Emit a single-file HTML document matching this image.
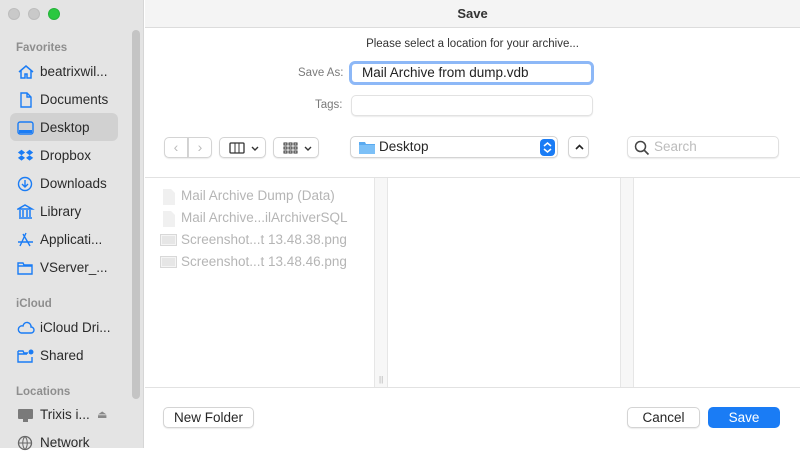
<!DOCTYPE html>
<html><head><meta charset="utf-8"><style>
*{box-sizing:border-box;margin:0;padding:0}
body{width:800px;height:448px;overflow:hidden;background:#fff;font-family:"Liberation Sans",sans-serif;position:relative;color:#262626}
.abs{position:absolute}
#side{left:0;top:0;width:144px;height:448px;background:#e4e4e4;border-right:1px solid #d6d6d6}
.dot{top:8px;width:12px;height:12px;border-radius:50%;background:#c9c9c9;border:1px solid #bdbdbd}
.sec{left:16px;font-size:11.5px;color:#8e8e8e;font-weight:bold}
.it{left:17px;font-size:13.5px;color:#2a2a2a;height:20px;line-height:20px;white-space:nowrap}
.it svg{position:absolute;left:0;top:2px}
.it span{position:absolute;left:23px}
#title{left:145px;top:0;width:655px;height:28px;background:#f4f4f4;border-bottom:1px solid #dcdcdc;text-align:center;font-size:13px;font-weight:bold;line-height:28px;color:#333}
.btn{background:#fff;border:1px solid #d4d4d4;border-radius:5px;box-shadow:0 1px 1px rgba(0,0,0,.08)}
.file{left:160px;font-size:13.5px;color:#b5b5b5;height:22px;line-height:22px}
.file span{position:absolute;left:21px;white-space:nowrap}
</style></head><body>
<div id="side" class="abs"></div>
<div class="abs dot" style="left:8px"></div>
<div class="abs dot" style="left:28px"></div>
<div class="abs dot" style="left:48px;background:#2ac840;border-color:#25b33a"></div>
<div class="abs" style="left:132px;top:30px;width:8px;height:369px;border-radius:4px;background:#c4c4c4"></div>
<div class="abs" style="left:10px;top:113px;width:108px;height:28px;border-radius:6px;background:#d1d1d1"></div>
<div class="abs sec" style="top:42px">Favorites</div>
<div class="abs it" style="top:62px"><svg width="18" height="16"><path d="M2 8L9 2l7 6M4 6v8h4v-4h2v4h4V6" fill="none" stroke="#1a7cf5" stroke-width="1.5"/></svg><span>beatrixwil...</span></div>
<div class="abs it" style="top:90px"><svg width="18" height="16"><path d="M4 1h6l4 4v10H4z M10 1v4h4" fill="none" stroke="#1a7cf5" stroke-width="1.4"/></svg><span>Documents</span></div>
<div class="abs it" style="top:118px"><svg width="18" height="16"><rect x="1" y="2" width="15" height="12" rx="2" fill="none" stroke="#1a7cf5" stroke-width="1.4"/><rect x="2" y="10" width="13" height="3" fill="#1a7cf5"/></svg><span>Desktop</span></div>
<div class="abs it" style="top:146px"><svg width="18" height="16"><path d="M4 2l4 3-4 3-4-3zM13 2l4 3-4 3-4-3zM4 8l4 3-4 3-4-3zM13 8l4 3-4 3-4-3z" fill="#1a7cf5" transform="scale(.9) translate(1,0)"/></svg><span>Dropbox</span></div>
<div class="abs it" style="top:174px"><svg width="18" height="16"><circle cx="8" cy="8" r="6.5" fill="none" stroke="#1a7cf5" stroke-width="1.4"/><path d="M8 4v7M5 8l3 3 3-3" fill="none" stroke="#1a7cf5" stroke-width="1.4"/></svg><span>Downloads</span></div>
<div class="abs it" style="top:202px"><svg width="18" height="16"><path d="M1 5L8 1l7 4zM2 14h13M3 6v7M6 6v7M10 6v7M13 6v7" fill="none" stroke="#1a7cf5" stroke-width="1.5"/></svg><span>Library</span></div>
<div class="abs it" style="top:230px"><svg width="18" height="16"><path d="M9 1L3 14M6 2l7 12M1 10h15" fill="none" stroke="#1a7cf5" stroke-width="1.4"/></svg><span>Applicati...</span></div>
<div class="abs it" style="top:258px"><svg width="18" height="16"><path d="M1 3h5l1 2h8v9H1z M1 6h14" fill="none" stroke="#1a7cf5" stroke-width="1.4"/></svg><span>VServer_...</span></div>
<div class="abs sec" style="top:298px">iCloud</div>
<div class="abs it" style="top:318px"><svg width="18" height="16"><path d="M4 13h10a3 3 0 0 0 0-6 4 4 0 0 0-8-1 3.5 3.5 0 0 0-2 7z" fill="none" stroke="#1a7cf5" stroke-width="1.4"/></svg><span>iCloud Dri...</span></div>
<div class="abs it" style="top:346px"><svg width="18" height="16"><path d="M1 3h5l1 2h4M1 3v11h14V9M1 6h9" fill="none" stroke="#1a7cf5" stroke-width="1.4"/><circle cx="14" cy="4" r="2.5" fill="#1a7cf5"/></svg><span>Shared</span></div>
<div class="abs sec" style="top:386px">Locations</div>
<div class="abs it" style="top:405px"><svg width="18" height="16"><rect x="1" y="2" width="15" height="10" rx="1" fill="#7a7a7a"/><rect x="6" y="12" width="5" height="3" fill="#7a7a7a"/></svg><span>Trixis i...</span><span style="left:80px;color:#888;font-size:11px">⏏</span></div>
<div class="abs it" style="top:433px"><svg width="18" height="16"><circle cx="8" cy="8" r="6.5" fill="none" stroke="#666" stroke-width="1.3"/><path d="M1.5 8h13M8 1.5c-3 3-3 10 0 13M8 1.5c3 3 3 10 0 13" fill="none" stroke="#666"/></svg><span>Network</span></div>

<div id="title" class="abs">Save</div>
<div class="abs" style="left:145px;top:38px;width:655px;text-align:center;font-size:11.5px;color:#333">Please select a location for your archive...</div>
<div class="abs" style="left:298px;top:67px;font-size:11.5px;color:#7a7a7a">Save As:</div>
<div class="abs" style="left:349px;top:61px;width:245px;height:24px;border:3px solid #8db8f7;border-radius:6px;padding-left:10px;line-height:18px;font-size:13.5px;color:#222">Mail Archive from dump.vdb</div>
<div class="abs" style="left:315px;top:99px;font-size:11.5px;color:#7a7a7a">Tags:</div>
<div class="abs btn" style="left:351px;top:95px;width:242px;height:21px;border-color:#e2e2e2"></div>

<div class="abs btn" style="left:164px;top:137px;width:24px;height:21px;border-radius:5px 0 0 5px;color:#bbb;font-size:14px;text-align:center;line-height:19px">‹</div>
<div class="abs btn" style="left:188px;top:137px;width:24px;height:21px;border-radius:0 5px 5px 0;color:#bbb;font-size:14px;text-align:center;line-height:19px">›</div>
<div class="abs btn" style="left:219px;top:137px;width:47px;height:21px"><svg class="abs" style="left:9px;top:4px" width="32" height="12"><rect x="1" y="1" width="14" height="10" rx="1" fill="none" stroke="#333" stroke-width="1.3"/><path d="M6 1v10M10 1v10" stroke="#333"/><path d="M23 5l3 3 3-3" fill="none" stroke="#333" stroke-width="1.4"/></svg></div>
<div class="abs btn" style="left:273px;top:137px;width:46px;height:21px"><svg class="abs" style="left:9px;top:4px" width="32" height="12"><g fill="none" stroke="#333"><rect x="1" y="1" width="3" height="2"/><rect x="6" y="1" width="3" height="2"/><rect x="11" y="1" width="3" height="2"/><rect x="1" y="5" width="3" height="2"/><rect x="6" y="5" width="3" height="2"/><rect x="11" y="5" width="3" height="2"/><rect x="1" y="9" width="3" height="2"/><rect x="6" y="9" width="3" height="2"/><rect x="11" y="9" width="3" height="2"/></g><path d="M22 5l3 3 3-3" fill="none" stroke="#333" stroke-width="1.4"/></svg></div>
<div class="abs btn" style="left:350px;top:136px;width:208px;height:22px"><svg class="abs" style="left:8px;top:3px" width="16" height="14"><path d="M0 2h6l1 2h9v10H0z" fill="#5aaaf0"/><rect x="0" y="5" width="16" height="9" fill="#7cc0f7"/></svg><span class="abs" style="left:28px;top:2px;font-size:13.5px">Desktop</span><div class="abs" style="left:189px;top:2px;width:15px;height:17px;border-radius:4px;background:#1a7cf5"><svg width="15" height="17"><path d="M4 7l3.5-3 3.5 3M4 10l3.5 3 3.5-3" fill="none" stroke="#fff" stroke-width="1.5"/></svg></div></div>
<div class="abs btn" style="left:568px;top:136px;width:21px;height:22px"><svg width="21" height="22"><path d="M7 12l3.5-3.5 3.5 3.5" fill="none" stroke="#222" stroke-width="1.6"/></svg></div>
<div class="abs btn" style="left:627px;top:136px;width:152px;height:22px;border-color:#e0e0e0"><svg class="abs" style="left:6px;top:3px" width="16" height="16"><circle cx="6.5" cy="6.5" r="5" fill="none" stroke="#444" stroke-width="1.5"/><path d="M10 10l4.5 4.5" stroke="#444" stroke-width="1.6"/></svg><span class="abs" style="left:26px;top:2px;font-size:13.5px;color:#bcbcbc">Search</span></div>

<div class="abs" style="left:145px;top:177px;width:655px;height:1px;background:#e2e2e2"></div>
<div class="abs" style="left:374px;top:178px;width:14px;height:209px;background:#f7f7f7;border-left:1px solid #e6e6e6;border-right:1px solid #e6e6e6"></div>
<div class="abs" style="left:379px;top:375px;font-size:8px;color:#aaa">||</div>
<div class="abs" style="left:620px;top:178px;width:14px;height:209px;background:#f7f7f7;border-left:1px solid #e6e6e6;border-right:1px solid #e6e6e6"></div>
<div class="abs" style="left:145px;top:387px;width:655px;height:1px;background:#e2e2e2"></div>

<div class="abs file" style="top:185px"><svg class="abs" style="left:2px;top:4px" width="14" height="16"><path d="M1 0h8l4 4v12H1z" fill="#f0f0f0"/></svg><span>Mail Archive Dump (Data)</span></div>
<div class="abs file" style="top:207px"><svg class="abs" style="left:2px;top:4px" width="14" height="16"><path d="M1 0h8l4 4v12H1z" fill="#f0f0f0"/></svg><span>Mail Archive...ilArchiverSQL</span></div>
<div class="abs file" style="top:229px"><svg class="abs" style="left:0;top:5px" width="18" height="13"><rect x="0.5" y="0.5" width="16" height="11" fill="#f4f4f4" stroke="#d8d8d8"/><rect x="2" y="2" width="13" height="8" fill="#e6e6e6"/></svg><span>Screenshot...t 13.48.38.png</span></div>
<div class="abs file" style="top:251px"><svg class="abs" style="left:0;top:5px" width="18" height="13"><rect x="0.5" y="0.5" width="16" height="11" fill="#f4f4f4" stroke="#d8d8d8"/><rect x="2" y="2" width="13" height="8" fill="#e6e6e6"/></svg><span>Screenshot...t 13.48.46.png</span></div>

<div class="abs btn" style="left:163px;top:407px;width:91px;height:21px;text-align:center;line-height:19px;font-size:13.5px">New Folder</div>
<div class="abs btn" style="left:627px;top:407px;width:73px;height:21px;text-align:center;line-height:19px;font-size:13.5px">Cancel</div>
<div class="abs" style="left:708px;top:407px;width:72px;height:21px;border-radius:5px;background:#1a7cf5;color:#fff;text-align:center;line-height:21px;font-size:13.5px">Save</div>
</body></html>
